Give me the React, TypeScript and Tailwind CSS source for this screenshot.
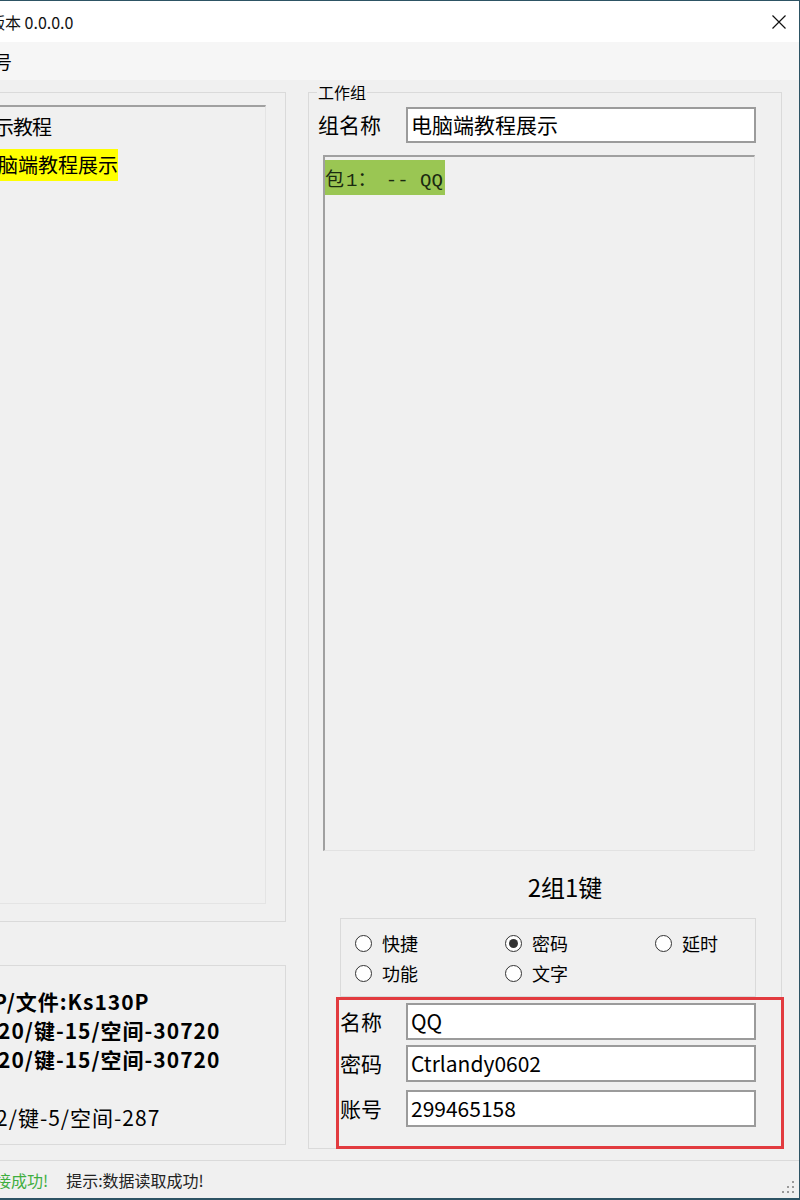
import { useState } from "react";

const cjk = "font-['Noto_Sans_CJK_SC','Noto_Sans',sans-serif]";

const Radio = ({
  label,
  checked,
  onClick,
}: {
  label: string;
  checked: boolean;
  onClick: () => void;
}) => (
  <div className="flex items-center h-[30px] cursor-pointer" onClick={onClick}>
    <span className="w-[17px] h-[17px] rounded-full border border-[#333] bg-white flex items-center justify-center">
      {checked && <span className="w-[9px] h-[9px] rounded-full bg-[#333]" />}
    </span>
    <span className="ml-[10px] text-[18px] leading-[30px]">{label}</span>
  </div>
);

const Field = ({ label, value, mt }: { label: string; value: string; mt: string }) => (
  <div className={`flex items-center ${mt}`}>
    <p className="w-[66px] text-[21px] leading-[37px]">{label}</p>
    <div className="w-[350px] h-[37px] bg-white border-2 border-[#9b9b9b] flex items-center pl-[3px] text-[21px]">
      {value}
    </div>
  </div>
);

const App = () => {
  const [mode, setMode] = useState("密码");

  return (
    <div
      className={`w-[800px] h-[1200px] overflow-hidden bg-[#f0f0f0] border-t border-r border-b-2 border-[#2d5364] flex flex-col text-black ${cjk}`}
    >
      {/* title bar */}
      <div className="h-[41px] bg-white flex items-center justify-between shrink-0">
        <p className="ml-[-11px] text-[16px] leading-[20px] text-[#111]">版本 0.0.0.0</p>
        <svg width="16" height="16" viewBox="0 0 16 16" className="mr-[12px]">
          <path d="M1.5 1.5 L14.5 14.5 M14.5 1.5 L1.5 14.5" stroke="#111" strokeWidth="1.2" />
        </svg>
      </div>

      {/* menu bar */}
      <div className="h-[38px] bg-[#f6f6f6] flex items-center shrink-0">
        <p className="ml-[-24px] text-[18px]">账号</p>
      </div>

      {/* body */}
      <div className="h-[1080px] flex shrink-0">
        <div className="ml-[-30px] w-[316px] shrink-0">
          <div className="mt-[12px] h-[830px] border border-[#dadada] pt-[12px] pl-[1px]">
            <div className="w-[294px] h-[799px] border-t-2 border-l-2 border-[#a0a0a0] border-r border-b border-r-[#e4e4e4] border-b-[#e4e4e4] pt-[1px] pl-[4px]">
              <div className="py-[3px]">
                <span className="text-[20px] leading-[32px] inline-block ml-[-3px] tracking-[-1px]">演示教程</span>
              </div>
              <div className="py-[3px]">
                <span className="text-[20px] leading-[32px] inline-block bg-[#ffff00]">电脑端教程展示</span>
              </div>
            </div>
          </div>

          <div className="mt-[43px] h-[180px] border border-[#dadada] pt-[21px] pl-[29px] text-[21px] leading-[29px] tracking-[1px]">
            <p className="font-bold ml-[-7px]">P/文件:Ks130P</p>
            <p className="font-bold ml-[-2px]">20/键-15/空间-30720</p>
            <p className="font-bold ml-[-2px]">20/键-15/空间-30720</p>
            <p className="h-[29px]" />
            <p className="ml-[-4px]">2/键-5/空间-287</p>
          </div>
        </div>

        {/* 工作组 */}
        <div className="ml-[22px] mt-[12px] w-[474px] h-[1057px] border border-[#dadada] relative shrink-0">
          <p className="absolute top-[-10px] left-[8px] px-[1px] bg-[#f0f0f0] text-[16px] leading-[18px]">
            工作组
          </p>

          <div className="mt-[14px] pl-[9px] flex items-center">
            <p className="w-[88px] text-[21px]">组名称</p>
            <div className="w-[350px] h-[36px] bg-white border-2 border-[#9b9b9b] flex items-center pl-[3px] text-[21px]">
              电脑端教程展示
            </div>
          </div>

          <div className="mt-[12px] ml-[14px] w-[432px] h-[696px] border-t-2 border-l-2 border-[#a0a0a0] border-r border-b border-r-[#e2e2e2] border-b-[#e2e2e2] pt-[3px]">
            <span className="inline-block h-[35px] leading-[35px] pr-[2px] bg-[#9ac653] text-[19px] whitespace-pre font-['Liberation_Mono','Noto_Sans_CJK_SC',monospace] text-[#1a2a10]">
              <span className="inline-block w-[21px] font-['Noto_Sans_CJK_SC',sans-serif]">包</span>
              1
              <span className="inline-block w-[17px] text-center">：</span>
              {" -- QQ"}
            </span>
          </div>

          <div className="mt-[21px] pl-[40px] flex justify-center">
            <p className="text-[24px] leading-[30px]">2组1键</p>
          </div>

          <div className="mt-[16px] ml-[31px] w-[416px] h-[79px] border border-[#dadada] pt-[9px] pl-[14px] grid content-start grid-cols-[150px_150px_100px]">
            {["快捷", "密码", "延时", "功能", "文字"].map((item) => (
              <Radio key={item} label={item} checked={mode === item} onClick={() => setMode(item)} />
            ))}
          </div>

          <div className="ml-[27px] w-[448px] h-[152px] border-[3px] border-[#e23b3f] pt-[3px] pl-[1px]">
            <Field label="名称" value="QQ" mt="mt-0" />
            <Field label="密码" value="Ctrlandy0602" mt="mt-[5px]" />
            <Field label="账号" value="299465158" mt="mt-[8px]" />
          </div>
        </div>
      </div>

      {/* status bar */}
      <div className="h-[38px] border-t border-[#dadada] flex items-center text-[16px] shrink-0">
        <p className="ml-[-21px] text-[#3fae3f]">连接成功!</p>
        <p className="ml-[18px] text-[#222]">提示:数据读取成功!</p>
        <svg width="14" height="14" viewBox="0 0 14 14" className="ml-auto mr-[4px] mt-[14px]">
          {[
            [11, 1],
            [11, 6],
            [6, 6],
            [11, 11],
            [6, 11],
            [1, 11],
          ].map(([x, y]) => (
            <rect key={`${x}-${y}`} x={x} y={y} width="2" height="2" fill="#9a9a9a" />
          ))}
        </svg>
      </div>
    </div>
  );
};

export default App;
